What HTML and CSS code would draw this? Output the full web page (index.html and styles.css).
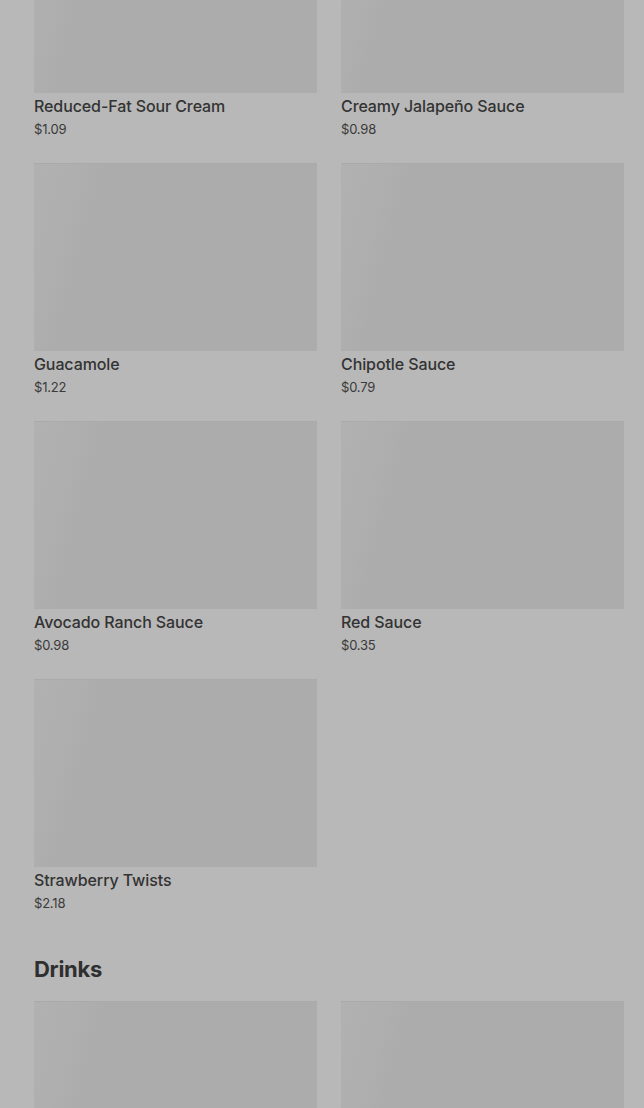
FILE: index.html
```html
<!DOCTYPE html>
<html lang="en">
<head>
	<meta charset="UTF-8">
	<meta name="viewport" content="width=device-width, initial-scale=1.0">
	<title>Menu</title>
	<link rel="stylesheet" href="styles.css">
</head>
<body>
	<div class="menu">
		<section class="section">
			<div class="items">
				<div class="item">
					<div class="thumb"></div>
					<h3>Reduced-Fat Sour Cream</h3>
					<p>$1.09</p>
				</div>
				<div class="item">
					<div class="thumb"></div>
					<h3>Creamy Jalapeño Sauce</h3>
					<p>$0.98</p>
				</div>
				<div class="item">
					<div class="thumb"></div>
					<h3>Guacamole</h3>
					<p>$1.22</p>
				</div>
				<div class="item">
					<div class="thumb"></div>
					<h3>Chipotle Sauce</h3>
					<p>$0.79</p>
				</div>
				<div class="item">
					<div class="thumb"></div>
					<h3>Avocado Ranch Sauce</h3>
					<p>$0.98</p>
				</div>
				<div class="item">
					<div class="thumb"></div>
					<h3>Red Sauce</h3>
					<p>$0.35</p>
				</div>
				<div class="item">
					<div class="thumb"></div>
					<h3>Strawberry Twists</h3>
					<p>$2.18</p>
				</div>
			</div>
		</section>

		<section class="section">
			<h2>Drinks</h2>
			<div class="items">
				<div class="item">
					<div class="thumb"></div>
				</div>
				<div class="item">
					<div class="thumb"></div>
				</div>
			</div>
		</section>
	</div>
</body>
</html>
```

FILE: styles.css
```css
* {
	box-sizing: border-box;
	padding: 0;
	margin: 0;
}

body {
	font-family: 'Inter', 'Liberation Sans', sans-serif;
	background: #b8b8b8;
	color: #333;
	overflow: hidden;
}

/* page is scrolled part way down the menu */
.menu {
	margin-top: -95px;
	padding: 0 20px 0 34px;
}

.section {
	padding-bottom: 40px;
}

.section > h2 {
	font-size: 22px;
	font-weight: 700;
	line-height: 32px;
	letter-spacing: -0.3px;
	color: #2f2f2f;
	margin-bottom: 16px;
}

.items {
	display: grid;
	grid-template-columns: 283px 283px;
	gap: 24px;
}

.thumb {
	height: 188px;
	background: linear-gradient(105deg, #b1b1b1 0, #afafaf 40px, #acacac 70px, #acacac 100%);
	border-top: 1px solid #aaa;
}

.item > h3 {
	margin-top: 3px;
	font-size: 16px;
	font-weight: 500;
	line-height: 20px;
	letter-spacing: -0.1px;
	color: #333;
}

.item > p {
	margin-top: 3px;
	font-size: 13px;
	line-height: 20px;
	color: #3a3a3a;
	letter-spacing: -0.2px;
}
```
